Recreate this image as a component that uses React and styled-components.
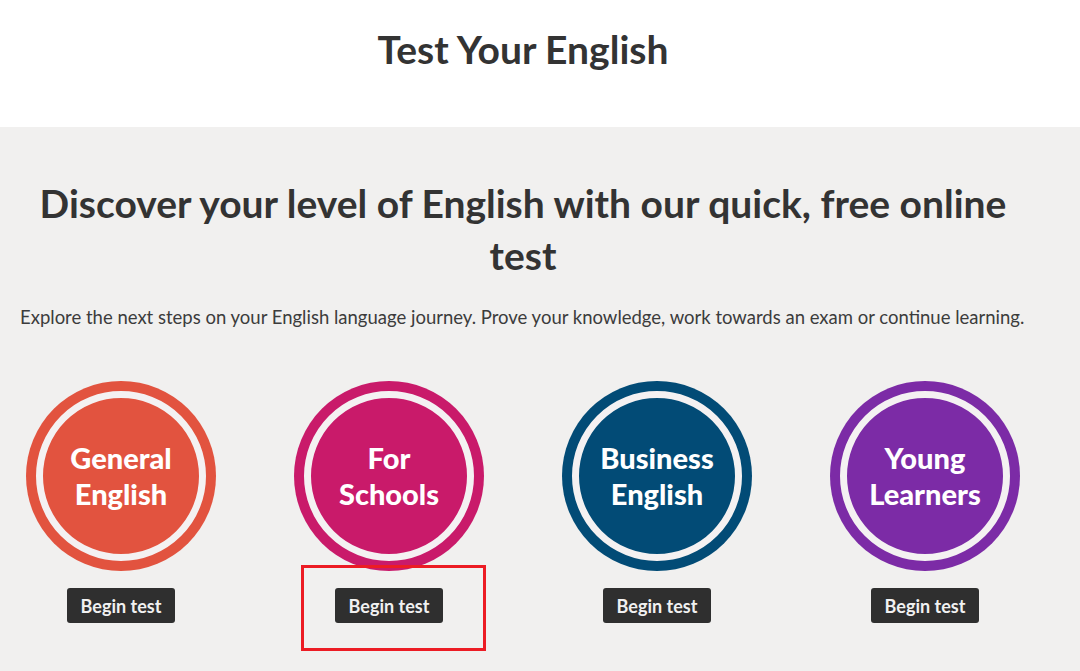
import React from 'react';
import styled, { createGlobalStyle } from 'styled-components';

const GlobalStyle = createGlobalStyle`
  html, body {
    margin: 0;
    padding: 0;
    background: #f1f0ef;
  }
  body {
    font-family: Lato, "Open Sans", sans-serif;
    color: #333333;
  }
`;

const Page = styled.div`
  width: 1080px;
  height: 671px;
  overflow: hidden;
  background: #f1f0ef;
`;

const Header = styled.header`
  height: 127px;
  background: #ffffff;
  box-sizing: border-box;
  padding-right: 34px;
  padding-top: 27px;
`;

const Title = styled.h1`
  margin: 0;
  text-align: center;
  font-size: 39px;
  line-height: 44px;
  font-weight: 700;
  color: #333333;
`;

const Section = styled.section`
  width: 1046px;
  padding-top: 50px;
`;

const Heading = styled.h2`
  margin: 0 auto;
  width: 990px;
  text-align: center;
  font-size: 39px;
  line-height: 52px;
  font-weight: 700;
  color: #333333;
`;

const Intro = styled.p`
  margin: 23px 0 0;
  padding-left: 20px;
  font-size: 18.5px;
  line-height: 26px;
  color: #3c3c3c;
  white-space: nowrap;
`;

const Row = styled.div`
  display: grid;
  grid-template-columns: repeat(4, 268px);
  margin: 51px -13px 0;
`;

const Card = styled.div`
  position: relative;
  display: flex;
  flex-direction: column;
  align-items: center;
`;

const Badge = styled.div`
  width: 190px;
  height: 190px;
  border-radius: 50%;
  background: ${(p) => p.color};
  display: flex;
  align-items: center;
  justify-content: center;
`;

const Ring = styled.div`
  width: 170px;
  height: 170px;
  border-radius: 50%;
  border: 7px solid #f4f1f2;
  box-sizing: border-box;
  display: flex;
  align-items: center;
  justify-content: center;
  color: #ffffff;
  font-size: 29px;
  line-height: 36px;
  font-weight: 900;
  text-align: center;
`;

const Button = styled.button`
  margin-top: 17px;
  height: 35px;
  padding: 0 14px;
  border: none;
  border-radius: 3px;
  background: #2f2f2f;
  color: #f1f1f1;
  font-family: Lato, "Open Sans", sans-serif;
  font-size: 18px;
  font-weight: 700;
  cursor: pointer;
`;

const Highlight = styled.div`
  position: absolute;
  left: 46px;
  top: 184px;
  width: 185px;
  height: 86px;
  border: 3px solid #ec1c24;
  box-sizing: border-box;
  pointer-events: none;
`;

const tests = [
  { id: 'general', lines: ['General', 'English'], color: '#e2533f' },
  { id: 'schools', lines: ['For', 'Schools'], color: '#c91a6a', marked: true },
  { id: 'business', lines: ['Business', 'English'], color: '#024b76' },
  { id: 'young', lines: ['Young', 'Learners'], color: '#7c2ba6' },
];

const App = () => (
  <Page>
    <GlobalStyle />
    <Header>
      <Title>Test Your English</Title>
    </Header>
    <Section>
      <Heading>Discover your level of English with our quick, free online test</Heading>
      <Intro>
        Explore the next steps on your English language journey. Prove your knowledge, work towards an exam or continue learning.
      </Intro>
      <Row>
        {tests.map((t) => (
          <Card key={t.id}>
            <Badge color={t.color}>
              <Ring>
                {t.lines[0]}
                <br />
                {t.lines[1]}
              </Ring>
            </Badge>
            <Button>Begin test</Button>
            {t.marked && <Highlight />}
          </Card>
        ))}
      </Row>
    </Section>
  </Page>
);

export default App;
